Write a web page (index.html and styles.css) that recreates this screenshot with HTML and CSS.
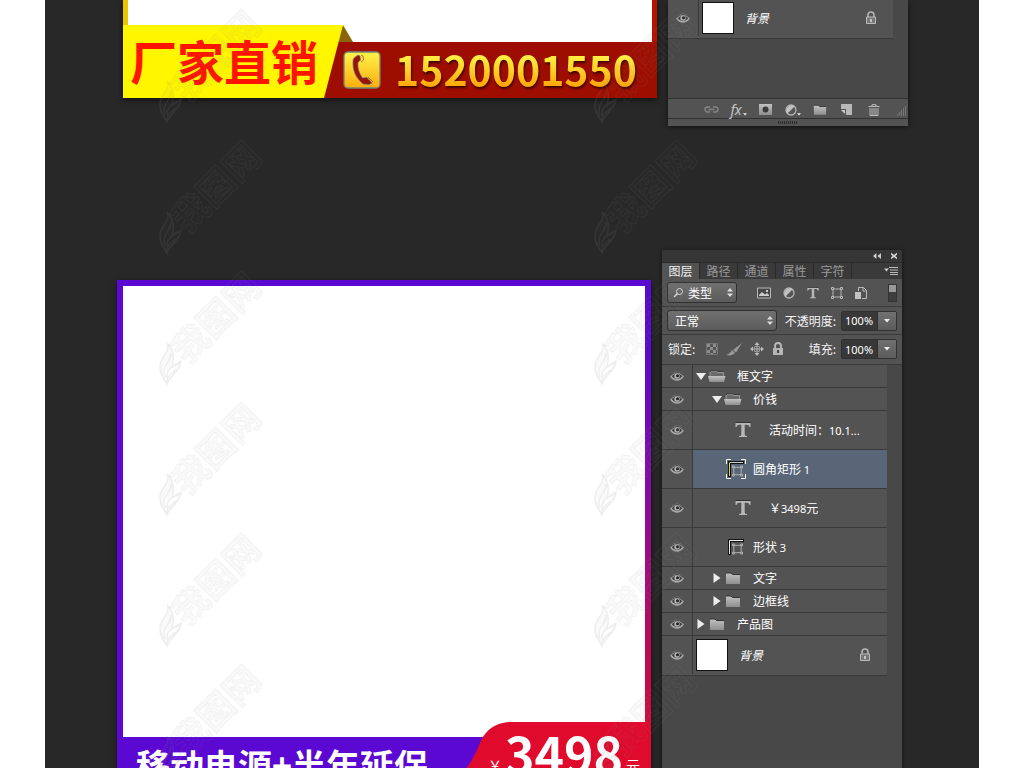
FILE: index.html
```
<!DOCTYPE html>
<html lang="zh-CN">
<head>
<meta charset="utf-8">
<title>主图模板</title>
<link rel="stylesheet" href="styles.css">
</head>
<body>
<svg class="defs" aria-hidden="true">
  <defs>
    <linearGradient id="gold" x1="0" y1="0" x2="0" y2="1"><stop offset="0" stop-color="#fff34a"/><stop offset="1" stop-color="#ffad0c"/></linearGradient>
    <linearGradient id="metal" x1="0" y1="0" x2="0" y2="1"><stop offset="0" stop-color="#c2c2c2"/><stop offset="1" stop-color="#8e8e8e"/></linearGradient>
    <symbol id="eye" viewBox="0 0 14 10"><path d="M1 5.5Q3.500 1.500 7 1.500T13 5.500Q10.500 9 7 9T1 5.500Z" fill="#3c3c3c" stroke="#aaa" stroke-width="1.300"/><path d="M1 4.200Q7-1.500 13 4.200" fill="none" stroke="#333" stroke-width=".8"/><circle cx="7" cy="5" r="2.700" fill="#b5b5b5"/><circle cx="7.500" cy="4.800" r="1.500" fill="#222"/></symbol>
    <symbol id="folder" viewBox="0 0 16 13"><path d="M1 1H6L7.500 2.500H15V12H1Z" fill="url(#metal)"/><path d="M1 1H6L7.500 2.500H15" fill="none" stroke="#333"/></symbol>
    <symbol id="open" viewBox="0 0 18 13"><path d="M2 6V2.500H3L4 1H8L9 2.500H15.500V6" fill="#6a6a6a" stroke="#999"/><path d="M2 1.500L4 .5H8L9 1.500H15.500" fill="none" stroke="#333" stroke-width=".8"/><path d="M0 6H17.500L16 12H1.500Z" fill="url(#metal)"/></symbol>
    <symbol id="type" viewBox="0 0 16 16"><path d="M.5 1H15.500V5H14.500Q14 2.800 12 2.800H9.700V12.500Q9.700 14 12 14V15H4V14Q6.300 14 6.300 12.500V2.800H4Q2 2.800 1.500 5H.5Z" fill="#b7b7b7"/><path d="M.5.5H15.500" stroke="#333"/></symbol>
    <symbol id="vector" viewBox="0 0 12 12"><path d="M2 2H10V10H2Z" fill="none" stroke="#b5b5b5"/><g fill="#555" stroke="#bbb"><path d="M.5.5h2v2h-2zM9.500.5h2v2h-2zM.5 9.500h2v2h-2zM9.500 9.500h2v2h-2z"/></g></symbol>
    <symbol id="down" viewBox="0 0 10 7"><path d="M0 0H10L5 7Z" fill="#eee"/></symbol>
    <symbol id="right" viewBox="0 0 7 10"><path d="M0 0V10L7 5Z" fill="#eee"/></symbol>
    <symbol id="lock" viewBox="0 0 12 14"><path d="M3 6V4Q3 1 6 1T9 4V6" fill="none" stroke="#b5b5b5" stroke-width="1.600"/><path d="M1.500 6H10.500V12.500H1.500Z" fill="#777" stroke="#bbb"/><path d="M6 8V11" stroke="#ddd" stroke-width="1.500"/></symbol>
    <symbol id="padlock" viewBox="0 0 12 14"><path d="M3 6V4Q3 1 6 1T9 4V6" fill="none" stroke="#bbb" stroke-width="1.800"/><path d="M1 6H11V13H1Z" fill="#b5b5b5"/><path d="M6 8V11" stroke="#444" stroke-width="2"/></symbol>
    <symbol id="half" viewBox="0 0 12 12"><circle cx="6" cy="6" r="5" fill="#555" stroke="#b5b5b5" stroke-width="1.300"/><path d="M2.500 9.500A5 5 0 0 1 9.500 2.500Z" fill="#c2c2c2"/></symbol>
    <symbol id="updown" viewBox="0 0 6 9"><path d="M0 3.500L3 0L6 3.500ZM0 5.500L3 9L6 5.500Z" fill="#ddd"/></symbol>
    <symbol id="caret" viewBox="0 0 6 4"><path d="M0 0H6L3 3.500Z" fill="#eee"/></symbol>
    <symbol id="flame" viewBox="0 0 26 44"><path d="M9 1C13 9 3 14 2 23C1 32 6 37 9 42C11 34 23 29 23 19C20 21 17 22 14 25C16 19 17 8 9 1ZM7 35C3 24 14 19 13 11M10 37C6 26 18 24 21 21M9 40C9 32 16 31 17 28" fill="rgba(90,90,90,.04)" stroke="rgba(145,145,145,.13)" stroke-width="1.500"/></symbol>
  </defs>
</svg>
<main class="desk">
  <section class="scene scene-top">
    <article class="poster poster-red">
      <div class="frame"></div>
      <footer class="strip">
        <h2 class="slogan">厂家直销</h2>
        <div class="phone">
          <svg width="38" height="38" viewBox="0 0 38 38" aria-hidden="true"><rect x="1" y="1" width="36" height="36" rx="4" fill="url(#gold)" stroke="#718678" stroke-width="1.300"/><path d="M11 7L15 4L17 5L17.500 9L15 11.500C14.500 17 16 22 19.500 27L24 26.500L29 32L26 33.500L20 33C13 27 10 20 10 13C10 10 10 8 11 7Z" fill="#9c1208" stroke="#5b7c82" stroke-width=".7"/><path d="M18 4L20 5L20.500 9L18 11M25 26L30 31" stroke="#b0702c" fill="none"/></svg>
          <span class="number">1520001550</span>
        </div>
      </footer>
    </article>
    <aside class="panel">
      <ul class="layers layers-short">
        <li class="row tall"><span class="see"><svg width="14" height="10"><use href="#eye"/></svg></span><span class="thumb"></span><i class="name">背景</i><svg class="pin" width="12" height="14"><use href="#lock"/></svg></li>
      </ul>
      <footer class="actions">
        <button type="button" aria-label="链接"><svg width="15" height="9" viewBox="0 0 15 9"><path d="M6 7H3.500A2.500 2.500 0 0 1 3.500 2H6M9 2h2.500a2.500 2.500 0 0 1 0 5H9M4.500 4.500h6" fill="none" stroke="#858585" stroke-width="1.400"/></svg></button>
        <button type="button" class="fx">fx<svg width="4" height="3"><use href="#caret"/></svg></button>
        <button type="button" aria-label="蒙版"><svg width="13" height="11" viewBox="0 0 13 11"><path d="M0 0H13V11H0Z" fill="url(#metal)"/><circle cx="6.500" cy="5.500" r="3" fill="#3a3a3a"/></svg></button>
        <button type="button" aria-label="调整"><svg width="12" height="12"><use href="#half"/></svg><svg class="tick" width="4" height="3"><use href="#caret"/></svg></button>
        <button type="button" aria-label="新建组"><svg width="14" height="12"><use href="#folder"/></svg></button>
        <button type="button" aria-label="新建图层"><svg width="11" height="11" viewBox="0 0 11 11"><path d="M0 0H11V11H5V5H0Z" fill="#b8b8b8"/><path d="M0 6H4V10Z" fill="#ccc"/></svg></button>
        <button type="button" aria-label="删除"><svg width="12" height="12" viewBox="0 0 12 12"><path d="M4 2V.7H8V2M.5 2.500H11.500M2 4V11.500H10V4M4 4v7M6 4v7M8 4v7" fill="none" stroke="#bbb"/></svg></button>
        <svg class="resize" width="10" height="10" viewBox="0 0 10 10"><path d="M0 9H10M2 7H10M4 5H10M6 3H10M8 1H10" stroke="#999" stroke-dasharray="1 1"/></svg>
      </footer>
      <div class="grip"><span></span></div>
    </aside>
  </section>

  <section class="scene scene-main">
    <article class="poster poster-violet">
      <div class="frame"><div class="canvas"></div></div>
      <footer class="strip">
        <h2 class="slogan">移动电源+半年延保</h2>
        <p class="price">
          <svg class="price-shape" viewBox="0 0 186 96" preserveAspectRatio="none" aria-hidden="true"><path d="M-10 58C8 44 12 26 18 15C25 4 36 0 46 0H186V96H-10Z" fill="#e00a2d"/></svg>
          <small>￥</small><b>3498</b><small>元</small>
        </p>
      </footer>
    </article>
    <aside class="panel panel-full">
      <header class="bar">
        <button type="button" aria-label="折叠"><svg width="8" height="6" viewBox="0 0 8 6"><path d="M3.500 0V6L0 3ZM8 0V6L4.500 3Z" fill="#ccc"/></svg></button>
        <button type="button" aria-label="关闭"><svg width="6" height="6" viewBox="0 0 6 6"><path d="M0 .5L6 5.500M6 .5L0 5.500" stroke="#ddd" stroke-width="1.500"/></svg></button>
      </header>
      <nav class="tabs">
        <button type="button" class="on">图层</button><button type="button">路径</button><button type="button">通道</button><button type="button">属性</button><button type="button">字符</button>
        <svg class="menu" width="14" height="8" viewBox="0 0 14 8"><path d="M0 1.500H5L2.500 4.500Z" fill="#ccc"/><path d="M5 .5H14M6 3H14M6 5.500H14M6 7.500H14" stroke="#bbb"/></svg>
      </nav>
      <div class="tools filter">
        <label class="pick pick-kind"><svg class="lens" width="11" height="10" viewBox="0 0 11 10"><circle cx="6.500" cy="3.500" r="3" fill="none" stroke="#ddd"/><path d="M4.500 5.500L1 9" stroke="#ddd" stroke-width="1.500"/></svg><select aria-label="筛选"><option>类型</option></select><svg class="arrows" width="6" height="9"><use href="#updown"/></svg></label>
        <div class="icons">
          <svg width="14" height="12" viewBox="0 0 14 12"><path d="M.5 1H13.500V11H.5Z" fill="#484848" stroke="#b8b8b8"/><path d="M2 9V8L5 5L8 7.500L10 6L12 8V9Z" fill="#ccc"/><path d="M9 3h2v2H9z" fill="#ccc"/></svg>
          <svg width="12" height="12"><use href="#half"/></svg>
          <svg width="12" height="12"><use href="#type"/></svg>
          <svg width="12" height="12"><use href="#vector"/></svg>
          <svg width="12" height="12" viewBox="0 0 12 12"><path d="M3.500 4V.5H8.500L11.500 3.500V11.500H7" fill="none" stroke="#bbb"/><path d="M8 .5V4H11.500" fill="none" stroke="#bbb"/><path d="M0 5H6V12H0Z" fill="#c3c3c3"/></svg>
        </div>
        <button type="button" class="switch" aria-label="开关筛选"></button>
      </div>
      <div class="tools blend">
        <label class="pick pick-blend"><select aria-label="混合模式"><option>正常</option></select><svg class="arrows" width="6" height="9"><use href="#updown"/></svg></label>
        <label class="caption" for="opacity">不透明度:</label>
        <span class="field"><input id="opacity" value="100%"><button type="button" aria-label="不透明度滑块"><svg width="6" height="4"><use href="#caret"/></svg></button></span>
      </div>
      <div class="tools locks">
        <span class="caption">锁定:</span>
        <div class="icons">
          <svg width="12" height="12" viewBox="0 0 12 12"><path d="M.5.5h11v11H.5z" fill="#555" stroke="#777"/><path d="M1 1h3v3H1zM7 1h3v3H7zM4 4h3v3H4zM1 7h3v3H1zM7 7h3v3H7zM10 4h1v3h-1zM4 10h3v1H4z" fill="#8d8d8d"/></svg>
          <svg width="16" height="13" viewBox="0 0 16 13"><path d="M16 0L10 9.500L7 7ZM6 7L9 10Q6 13.500 0 12Q4 11 6 7Z" fill="#999"/></svg>
          <svg width="14" height="14" viewBox="0 0 14 14"><path d="M7 2V12M2 7H12" stroke="#bbb"/><path d="M7 0L9.500 3H4.500ZM7 14L4.500 11H9.500ZM0 7L3 4.500V9.500ZM14 7L11 4.500V9.500Z" fill="#bbb"/><path d="M4.500 4.500h5v5h-5z" fill="none" stroke="#999"/></svg>
          <svg width="12" height="14"><use href="#padlock"/></svg>
        </div>
        <label class="caption" for="fill">填充:</label>
        <span class="field"><input id="fill" value="100%"><button type="button" aria-label="填充滑块"><svg width="6" height="4"><use href="#caret"/></svg></button></span>
      </div>
      <ul class="layers">
        <li class="row"><span class="see"><svg width="14" height="10"><use href="#eye"/></svg></span><svg class="twist" width="10" height="7"><use href="#down"/></svg><svg class="dir" width="18" height="13"><use href="#open"/></svg><span class="name">框文字</span></li>
        <li class="row deep"><span class="see"><svg width="14" height="10"><use href="#eye"/></svg></span><svg class="twist" width="10" height="7"><use href="#down"/></svg><svg class="dir" width="18" height="13"><use href="#open"/></svg><span class="name">价钱</span></li>
        <li class="row mid text"><span class="see"><svg width="14" height="10"><use href="#eye"/></svg></span><svg class="glyph" width="16" height="16"><use href="#type"/></svg><span class="name">活动时间：<em>10.1...</em></span></li>
        <li class="row mid shape chosen"><span class="see"><svg width="14" height="10"><use href="#eye"/></svg></span><svg class="glyph" width="20" height="20" viewBox="0 0 20 20"><path d="M.5 5V.5H5M15 .5H19.500V5M19.500 15V19.500H15M5 19.500H.5V15" fill="none" stroke="#fff"/><path d="M3.500 18V3.500H18" fill="none" stroke="#111" stroke-width="3"/><path d="M3.500 17V3.500" stroke="#e5dc1b"/><path d="M4 3.500H17" stroke="#ccc"/><use href="#vector" x="6" y="6" width="11" height="12"/></svg><span class="name">圆角矩形 <em>1</em></span></li>
        <li class="row mid text"><span class="see"><svg width="14" height="10"><use href="#eye"/></svg></span><svg class="glyph" width="16" height="16"><use href="#type"/></svg><span class="name">￥<em>3498</em>元</span></li>
        <li class="row mid shape"><span class="see"><svg width="14" height="10"><use href="#eye"/></svg></span><svg class="glyph" width="20" height="20" viewBox="0 0 20 20"><path d="M3.500 18V3.500H18" fill="none" stroke="#111" stroke-width="3"/><path d="M3.500 17V3.500H17" fill="none" stroke="#eee"/><use href="#vector" x="6" y="6" width="11" height="12"/></svg><span class="name">形状 <em>3</em></span></li>
        <li class="row deep"><span class="see"><svg width="14" height="10"><use href="#eye"/></svg></span><svg class="twist" width="10" height="10"><use href="#right"/></svg><svg class="dir" width="18" height="13"><use href="#folder"/></svg><span class="name">文字</span></li>
        <li class="row deep"><span class="see"><svg width="14" height="10"><use href="#eye"/></svg></span><svg class="twist" width="10" height="10"><use href="#right"/></svg><svg class="dir" width="18" height="13"><use href="#folder"/></svg><span class="name">边框线</span></li>
        <li class="row"><span class="see"><svg width="14" height="10"><use href="#eye"/></svg></span><svg class="twist" width="10" height="10"><use href="#right"/></svg><svg class="dir" width="18" height="13"><use href="#folder"/></svg><span class="name">产品图</span></li>
        <li class="row tall"><span class="see"><svg width="14" height="10"><use href="#eye"/></svg></span><span class="thumb"></span><i class="name">背景</i><svg class="pin" width="12" height="14"><use href="#lock"/></svg></li>
      </ul>
    </aside>
  </section>

  <div class="marks">
    <div class="mark"><svg><use href="#flame"/></svg><span>我图网</span></div><div class="mark"><svg><use href="#flame"/></svg><span>我图网</span></div>
    <div class="mark"><svg><use href="#flame"/></svg><span>我图网</span></div><div class="mark"><svg><use href="#flame"/></svg><span>我图网</span></div>
    <div class="mark"><svg><use href="#flame"/></svg><span>我图网</span></div><div class="mark"><svg><use href="#flame"/></svg><span>我图网</span></div>
    <div class="mark"><svg><use href="#flame"/></svg><span>我图网</span></div><div class="mark"><svg><use href="#flame"/></svg><span>我图网</span></div>
    <div class="mark"><svg><use href="#flame"/></svg><span>我图网</span></div><div class="mark"><svg><use href="#flame"/></svg><span>我图网</span></div>
    <div class="mark"><svg><use href="#flame"/></svg><span>我图网</span></div><div class="mark"><svg><use href="#flame"/></svg><span>我图网</span></div>
  </div>
</main>
</body>
</html>
```
FILE: styles.css
```
* { box-sizing: border-box; }
body {
  margin: 0;
  height: 100vh;
  overflow: hidden;
  background: #fff;
  font-family: "Noto Sans CJK SC", sans-serif;
  font-size: 12px;
  color: #f2f2f2;
}
h2, p, ul { margin: 0; padding: 0; }
svg { display: block; flex: none; }
button { border: 0; padding: 0; background: none; color: inherit; font: inherit; }
.defs { position: absolute; width: 0; height: 0; }

.desk {
  position: relative;
  height: 100vh;
  margin: 0 45px;
  overflow: hidden;
  background: #282828;
}
.scene { display: flex; align-items: flex-start; gap: 11px; }
.scene-top { padding: 0 71px 0 78px; }
.scene-main { padding: 0 77px 0 72px; margin-top: 124px; }

/* Posters */
.poster { flex: 1; min-width: 0; box-shadow: 0 2px 6px rgba(0, 0, 0, .6); }
.slogan { font-weight: 700; white-space: nowrap; }
.strip { position: relative; display: flex; }

.poster-red .frame {
  height: 42px;
  margin-bottom: -17px;
  background: #fff;
  border-left: 5px solid #edc400;
  border-right: 5px solid #b51200;
}
.poster-red .strip {
  height: 73px;
  background: linear-gradient(transparent 17px, #9e0e00 17px);
}
.poster-red .strip::before {
  content: "";
  position: absolute;
  left: 210px;
  top: 0;
  width: 20px;
  height: 17px;
  background: #8a6508;
  clip-path: polygon(50% 0, 100% 100%, 0 100%);
}
.poster-red .slogan {
  position: relative;
  width: 220px;
  padding-left: 7px;
  background: #fff600;
  clip-path: polygon(0 0, 100% 0, 201px 100%, 0 100%);
  color: #ff1400;
  font-size: 47px;
  line-height: 70px;
}
.phone { display: flex; align-items: center; gap: 14px; padding-top: 17px; }
.number {
  padding-bottom: 5px;
  font-size: 41px;
  font-weight: 700;
  line-height: 56px;
  background: linear-gradient(#fff94a 20%, #ffa708 76%);
  -webkit-background-clip: text;
  background-clip: text;
  color: transparent;
  filter: drop-shadow(1px 2px 1px rgba(40, 0, 0, .8));
}

.poster-violet { margin-top: 30px; background: #5b08d3; }
.poster-violet .frame {
  padding: 6px 6px 0;
  background: linear-gradient(#5b08d3 15%, #8a0b9e 48%, #c00a50 83%, #d60a38) right / 6px 100% no-repeat;
}
.canvas { height: 451px; background: #fff; }
.poster-violet .strip { justify-content: space-between; height: 80px; }
.poster-violet .slogan { padding-left: 19px; font-size: 34px; line-height: 56px; color: #fff; }
.price {
  position: relative;
  display: flex;
  align-items: flex-start;
  width: 186px;
  margin-top: -15px;
  padding-left: 23px;
  gap: 3px;
  color: #fff;
  line-height: 60px;
}
.price-shape { position: absolute; inset: 0; width: 100%; height: 100%; }
.price b { position: relative; font-size: 50px; font-weight: 700; }
.price small { position: relative; font-size: 14px; line-height: 86px; }

/* Layers panel */
.panel {
  flex: none;
  width: 240px;
  background: #484848;
  box-shadow: 0 1px 5px rgba(0, 0, 0, .6);
}
.panel-full { height: 540px; border-radius: 3px 3px 0 0; }
.bar {
  display: flex;
  justify-content: flex-end;
  align-items: center;
  gap: 10px;
  height: 12px;
  padding-right: 5px;
  background: #363636;
  border-radius: 3px 3px 0 0;
}
.tabs { display: flex; height: 17px; background: #3a3a3a; border-top: 1px solid #2a2a2a; }
.tabs button { width: 38px; border-right: 1px solid #2a2a2a; color: #999; line-height: 16px; }
.tabs .on { background: #535353; color: #f0f0f0; }
.menu { margin: 4px 4px 0 auto; }
.tools {
  display: flex;
  align-items: center;
  height: 28px;
  padding: 0 5px;
  background: #535353;
  border-bottom: 1px solid #3b3b3b;
}
.locks { height: 30px; padding-bottom: 1px; }
.pick { position: relative; display: block; }
.pick-kind { width: 70px; }
.pick-blend { width: 110px; }
.pick select {
  display: block;
  width: 100%;
  height: 21px;
  padding: 0 0 0 7px;
  appearance: none;
  border: 1px solid #303030;
  border-radius: 3px;
  background: linear-gradient(#707070, #5c5c5c);
  color: #fff;
  font: inherit;
  line-height: 18px;
}
.pick-kind select { padding-left: 20px; }
.lens { position: absolute; left: 6px; top: 6px; }
.arrows { position: absolute; right: 4px; top: 6px; }
.filter .icons { display: flex; gap: 12px; margin-left: 20px; }
.switch {
  width: 9px;
  height: 18px;
  margin-left: auto;
  border: 1px solid #333;
  background: linear-gradient(#999 45%, #3e3e3e 45%);
}
.caption { white-space: nowrap; line-height: 18px; }
.blend .caption, .locks label { margin-left: auto; margin-right: 5px; }
.locks .caption:first-child { margin-left: 1px; }
.locks .icons { display: flex; align-items: center; gap: 8px; margin-left: 11px; }
.field { display: flex; width: 56px; height: 20px; border: 1px solid #303030; border-radius: 2px; }
.field input {
  width: 35px;
  padding: 0 0 0 3px;
  border: 0;
  background: #383838;
  color: #fff;
  font: 11px "Noto Sans", sans-serif;
}
.field button {
  display: grid;
  place-items: center;
  flex: 1;
  border-left: 1px solid #303030;
  background: linear-gradient(#707070, #5c5c5c);
}

.layers { margin-right: 15px; list-style: none; }
.layers-short { height: 98px; }
.row {
  display: flex;
  align-items: center;
  height: 23px;
  background: #535353;
  border-bottom: 1px solid #393939;
}
.row.mid { height: 39px; }
.row.tall { height: 40px; padding-bottom: 1px; }
.layers-short .row.tall { height: 39px; padding-bottom: 2px; }
.see {
  display: grid;
  place-items: center;
  align-self: stretch;
  width: 31px;
  margin-right: 3px;
  border-right: 1px solid #393939;
}
.chosen { background: linear-gradient(90deg, #535353 31px, #596678 31px); }
.deep .see { margin-right: 19px; }
.twist { margin-right: 2px; }
.dir { margin-right: 11px; }
.text .see { margin-right: 42px; }
.text .glyph { margin-right: 18px; }
.shape .see { margin-right: 33px; }
.shape .glyph { margin-right: 7px; }
.name { color: #fff; white-space: nowrap; line-height: 18px; }
.name em { font: 11px "Noto Sans", sans-serif; }
.thumb { width: 32px; height: 32px; margin-right: 11px; background: #fff; border: 1px solid #111; }
.pin { margin-left: auto; margin-right: 16px; }

.actions {
  display: flex;
  height: 21px;
  padding: 2px 0 0 30px;
  background: #535353;
  border-top: 1px solid #333;
  border-bottom: 1px solid #303030;
}
.actions button { display: flex; align-items: center; justify-content: center; width: 27px; }
.actions .fx { gap: 1px; color: #c5c5c5; font: italic 14px "Noto Sans", sans-serif; }
.fx svg, .tick { align-self: flex-end; margin-bottom: 2px; }
.resize { margin: auto 1px 2px auto; }
.grip { display: grid; place-items: center; height: 7px; background: #535353; }
.grip span { width: 20px; height: 3px; background: repeating-linear-gradient(90deg, #2a2a2a 0 1px, transparent 1px 2px); }

/* Repeating watermark */
.marks {
  position: absolute;
  inset: 0;
  display: grid;
  grid-template-columns: 435px 435px;
  grid-auto-rows: 131px;
  padding: 8px 0 0 113px;
  overflow: hidden;
  pointer-events: none;
}
.mark { position: relative; }
.mark svg { position: absolute; left: 0; top: 72px; width: 26px; height: 44px; }
.mark span {
  position: absolute;
  left: 2px;
  top: 22px;
  font-size: 36px;
  font-weight: 700;
  line-height: 48px;
  color: rgba(80, 80, 80, .03);
  -webkit-text-stroke: 1px rgba(145, 145, 145, .11);
  transform: rotate(-45deg);
}
```
